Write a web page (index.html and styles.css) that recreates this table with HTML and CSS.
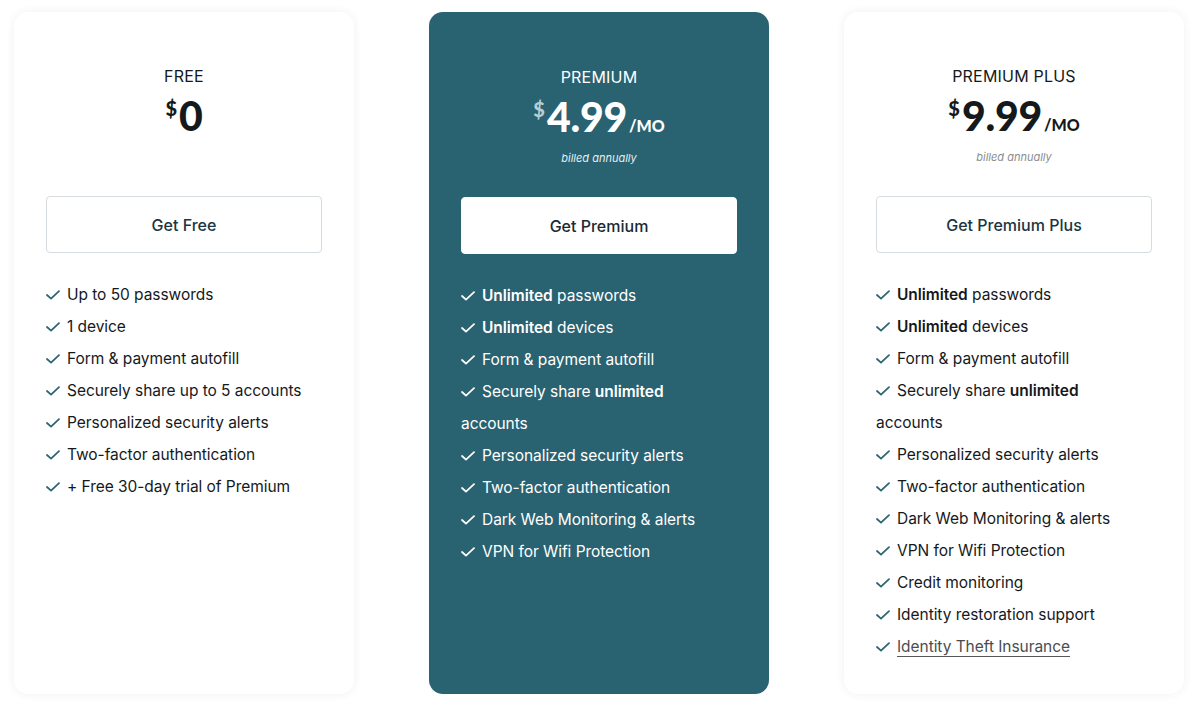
FILE: index.html
```html
<!DOCTYPE html>
<html lang="en">
<head>
<meta charset="utf-8">
<title>Pricing</title>
<link rel="stylesheet" href="styles.css">
</head>
<body>
<svg width="0" height="0" class="defs">
  <defs>
    <symbol id="check" viewBox="0 0 14 10">
      <polyline points="1,5 5,8.6 13,1.2" fill="none" stroke="currentColor" stroke-width="1.8" stroke-linecap="round" stroke-linejoin="round"/>
    </symbol>
  </defs>
</svg>
<main class="plans">
  <section class="card">
    <h2 class="plan-name">FREE</h2>
    <div class="price"><span class="cur">$</span><span class="amt">0</span></div>
    <div class="billed"></div>
    <a class="btn" href="#">Get Free</a>
    <ul class="features">
      <li><svg class="chk"><use href="#check"/></svg>Up to 50 passwords</li>
      <li><svg class="chk"><use href="#check"/></svg>1 device</li>
      <li><svg class="chk"><use href="#check"/></svg>Form &amp; payment autofill</li>
      <li><svg class="chk"><use href="#check"/></svg>Securely share up to 5 accounts</li>
      <li><svg class="chk"><use href="#check"/></svg>Personalized security alerts</li>
      <li><svg class="chk"><use href="#check"/></svg>Two-factor authentication</li>
      <li><svg class="chk"><use href="#check"/></svg>+ Free 30-day trial of Premium</li>
    </ul>
  </section>
  <section class="card featured">
    <h2 class="plan-name">PREMIUM</h2>
    <div class="price"><span class="cur">$</span><span class="amt">4.99</span><span class="per">/MO</span></div>
    <div class="billed">billed annually</div>
    <a class="btn" href="#">Get Premium</a>
    <ul class="features">
      <li><svg class="chk"><use href="#check"/></svg><b>Unlimited</b> passwords</li>
      <li><svg class="chk"><use href="#check"/></svg><b>Unlimited</b> devices</li>
      <li><svg class="chk"><use href="#check"/></svg>Form &amp; payment autofill</li>
      <li><svg class="chk"><use href="#check"/></svg>Securely share <b>unlimited</b><br>accounts</li>
      <li><svg class="chk"><use href="#check"/></svg>Personalized security alerts</li>
      <li><svg class="chk"><use href="#check"/></svg>Two-factor authentication</li>
      <li><svg class="chk"><use href="#check"/></svg>Dark Web Monitoring &amp; alerts</li>
      <li><svg class="chk"><use href="#check"/></svg>VPN for Wifi Protection</li>
    </ul>
  </section>
  <section class="card">
    <h2 class="plan-name">PREMIUM PLUS</h2>
    <div class="price"><span class="cur">$</span><span class="amt">9.99</span><span class="per">/MO</span></div>
    <div class="billed">billed annually</div>
    <a class="btn" href="#">Get Premium Plus</a>
    <ul class="features">
      <li><svg class="chk"><use href="#check"/></svg><b>Unlimited</b> passwords</li>
      <li><svg class="chk"><use href="#check"/></svg><b>Unlimited</b> devices</li>
      <li><svg class="chk"><use href="#check"/></svg>Form &amp; payment autofill</li>
      <li><svg class="chk"><use href="#check"/></svg>Securely share <b>unlimited</b><br>accounts</li>
      <li><svg class="chk"><use href="#check"/></svg>Personalized security alerts</li>
      <li><svg class="chk"><use href="#check"/></svg>Two-factor authentication</li>
      <li><svg class="chk"><use href="#check"/></svg>Dark Web Monitoring &amp; alerts</li>
      <li><svg class="chk"><use href="#check"/></svg>VPN for Wifi Protection</li>
      <li><svg class="chk"><use href="#check"/></svg>Credit monitoring</li>
      <li><svg class="chk"><use href="#check"/></svg>Identity restoration support</li>
      <li><svg class="chk"><use href="#check"/></svg><a class="link" href="#">Identity Theft Insurance</a></li>
    </ul>
  </section>
</main>
</body>
</html>
```
FILE: styles.css
```css
* { box-sizing: border-box; }
html, body { margin: 0; padding: 0; background: #ffffff; }
body {
  font-family: Inter, "Noto Sans", "Liberation Sans", sans-serif;
  color: #15191c;
  width: 1195px;
  height: 706px;
  overflow: hidden;
}
.defs { position: absolute; }
.plans {
  display: flex;
  gap: 75px;
  padding: 12px 11px 12px 14px;
  height: 706px;
}
.card {
  width: 340px;
  flex: 0 0 340px;
  background: #ffffff;
  border-radius: 14px;
  box-shadow: 0 0 10px rgba(40, 60, 70, 0.07);
  padding: 54px 32px 0;
  display: flex;
  flex-direction: column;
  align-items: stretch;
}
.card.featured {
  background: #296271;
  color: #ffffff;
  padding-top: 55px;
  box-shadow: none;
}
.plan-name {
  margin: 0;
  font-size: 16px;
  line-height: 20px;
  font-weight: 400;
  text-align: center;
  letter-spacing: 0.2px;
}
.price {
  margin-top: 6px;
  height: 48px;
  display: flex;
  justify-content: center;
  align-items: baseline;
  font-family: Lato, "Liberation Sans", sans-serif;
  font-weight: 900;
  line-height: 48px;
}
.cur {
  font-size: 20px;
  align-self: flex-start;
  line-height: 28px;
  margin-top: 2px;
  margin-right: 2px;
}
.featured .cur { color: #b8ccd1; }
.amt {
  font-size: 41px;
  letter-spacing: -0.3px;
}
.per {
  font-size: 16px;
  margin-left: 2px;
}
.billed {
  margin-top: 9px;
  height: 16px;
  font-size: 11px;
  line-height: 16px;
  font-style: italic;
  text-align: center;
  color: #8a8d8f;
}
.featured .billed { color: #e6eef0; }
.btn {
  margin-top: 31px;
  height: 57px;
  display: flex;
  align-items: center;
  justify-content: center;
  border: 1px solid #d6dcdf;
  border-radius: 4px;
  background: #ffffff;
  color: #1b3640;
  font-size: 16px;
  font-weight: 500;
  text-decoration: none;
}
.featured .btn { border-color: #ffffff; color: #1a2a30; }
.features {
  list-style: none;
  margin: 26px 0 0;
  padding: 0;
  font-size: 15.5px;
  letter-spacing: -0.05px;
  line-height: 32px;
}
.features li { margin: 0; }
.features b { font-weight: 600; }
.chk {
  width: 14px;
  height: 10px;
  margin-right: 7px;
  color: #2d6474;
  vertical-align: 0;
}
.featured .chk { color: #ffffff; }
.link {
  color: #4a4d50;
  text-decoration: underline;
  text-underline-offset: 4px;
  text-decoration-thickness: 1px;
  text-decoration-color: #55585a;
}
```
